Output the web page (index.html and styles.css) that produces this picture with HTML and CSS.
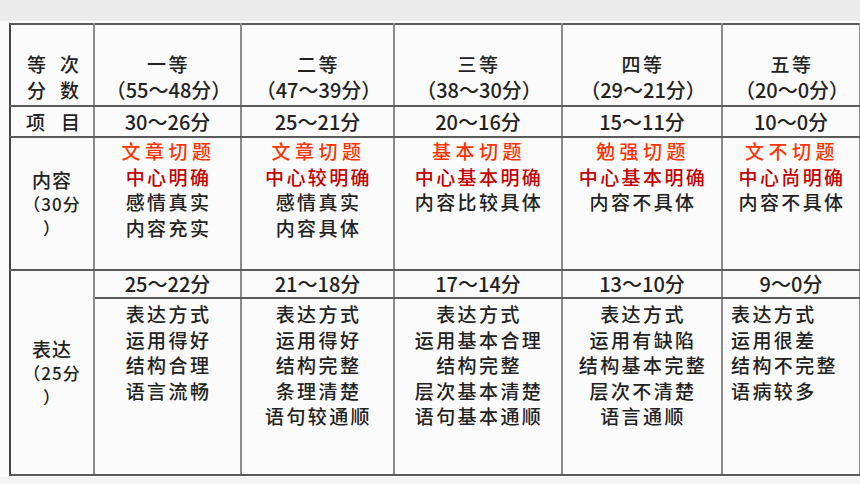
FILE: index.html
```html
<!DOCTYPE html>
<html lang="zh-CN">
<head>
<meta charset="utf-8">
<title>评分标准</title>
<link rel="stylesheet" href="styles.css">
</head>
<body>
<div class="topbar"></div>
<div class="sheet">
<table class="grid">
  <colgroup>
    <col class="c0"><col class="c1"><col class="c2"><col class="c3"><col class="c4"><col class="c5">
  </colgroup>
  <tr class="r-head">
    <td class="lbl kai"><span class="wide">等次</span><br><span class="wide">分数</span></td>
    <td class="kai">一等<br><span class="num">（55～48分）</span></td>
    <td class="kai">二等<br><span class="num">（47～39分）</span></td>
    <td class="kai">三等<br><span class="num">（38～30分）</span></td>
    <td class="kai">四等<br><span class="num">（29～21分）</span></td>
    <td class="kai">五等<br><span class="num">（20～0分）</span></td>
  </tr>
  <tr class="r-item">
    <td class="lbl kai"><span class="wide2">项目</span></td>
    <td class="num">30～26分</td>
    <td class="num">25～21分</td>
    <td class="num">20～16分</td>
    <td class="num">15～11分</td>
    <td class="num">10～0分</td>
  </tr>
  <tr class="r-content">
    <td class="lbl side">内容<br><span class="small">（30分</span><br><span class="small">）</span></td>
    <td class="kai body"><span class="red1">文章切题</span><br><span class="red2">中心明确</span><br>感情真实<br>内容充实</td>
    <td class="kai body"><span class="red1">文章切题</span><br><span class="red2">中心较明确</span><br>感情真实<br>内容具体</td>
    <td class="kai body"><span class="red1">基本切题</span><br><span class="red2">中心基本明确</span><br>内容比较具体</td>
    <td class="kai body"><span class="red1">勉强切题</span><br><span class="red2">中心基本明确</span><br>内容不具体</td>
    <td class="kai body"><span class="red1">文不切题</span><br><span class="red2">中心尚明确</span><br>内容不具体</td>
  </tr>
  <tr class="r-score">
    <td class="lbl side" rowspan="2">表达<br><span class="small">（25分</span><br><span class="small">）</span></td>
    <td class="num">25～22分</td>
    <td class="num">21～18分</td>
    <td class="num">17～14分</td>
    <td class="num">13～10分</td>
    <td class="num">9～0分</td>
  </tr>
  <tr class="r-express">
    <td class="kai body">表达方式<br>运用得好<br>结构合理<br>语言流畅</td>
    <td class="kai body">表达方式<br>运用得好<br>结构完整<br>条理清楚<br>语句较通顺</td>
    <td class="kai body">表达方式<br>运用基本合理<br>结构完整<br>层次基本清楚<br>语句基本通顺</td>
    <td class="kai body">表达方式<br>运用有缺陷<br>结构基本完整<br>层次不清楚<br>语言通顺</td>
    <td class="kai body left">表达方式<br>运用很差<br>结构不完整<br>语病较多</td>
  </tr>
</table>
</div>
</body>
</html>
```

FILE: styles.css
```css
html, body {
  margin: 0;
  padding: 0;
}
body {
  width: 860px;
  height: 484px;
  background: #f3f3f3;
  font-family: "Noto Sans CJK SC", sans-serif;
  color: #222;
  overflow: hidden;
}
.topbar {
  height: 21px;
  background: #ececec;
}
.sheet {
  background: #fbfbfb;
  padding: 2px 0 2px 9px;
  height: 452px;
}
.grid {
  border-collapse: collapse;
  table-layout: fixed;
  width: 850px;
  border: 2px solid #444;
}
.c0 { width: 84px; }
.c1 { width: 147px; }
.c2 { width: 153px; }
.c3 { width: 168px; }
.c4 { width: 160px; }
.c5 { width: 138px; }
.grid td {
  border-left: 2px solid #8c8c8c;
  border-right: 2px solid #8c8c8c;
  border-top: 2px solid #5a5a5a;
  border-bottom: 2px solid #5a5a5a;
  text-align: center;
  padding: 0;
  font-size: 19px;
  line-height: 25.6px;
  font-weight: 500;
}
.grid tr > td:first-child { border-left: 2px solid #444; }
.kai {
  letter-spacing: 2.4px;
  padding-left: 2px !important;
}
.num {
  font-size: 20px;
  letter-spacing: 0;
}
.grid td.num { font-size: 20px; }
.r-head td {
  height: 78px;
  vertical-align: bottom;
  padding-bottom: 2px !important;
  line-height: 26px;
}
.r-item td {
  height: 29px;
  vertical-align: middle;
}
.r-content td {
  height: 131px;
  vertical-align: top;
  padding-top: 0 !important;
}
.r-content td.side { vertical-align: middle; }
.r-score td {
  height: 26px;
  vertical-align: middle;
}
.r-express td {
  height: 173px;
  vertical-align: top;
  padding-top: 2px !important;
}
.r-express td.left {
  text-align: left;
  padding-left: 8px !important;
}
.side {
  line-height: 23px !important;
  letter-spacing: 1px;
}
.small {
  font-size: 17px;
}
.wide { letter-spacing: 14px; margin-right: -14px; }
.wide2 { letter-spacing: 16px; margin-right: -16px; }
.red1 { color: #ff3300; letter-spacing: 4.5px; }
.red2 { color: #c40000; }
```
